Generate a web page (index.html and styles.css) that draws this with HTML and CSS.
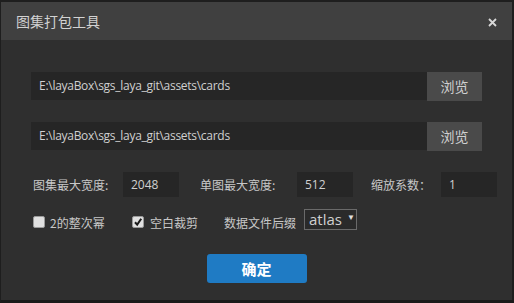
FILE: index.html
```html
<!DOCTYPE html>
<html>
<head>
<meta charset="utf-8">
<link rel="stylesheet" href="styles.css">
</head>
<body>
<div class="win">
  <div class="titlebar">
    <span class="title">图集打包工具</span>
    <svg class="close" width="9" height="9" viewBox="0 0 9 9"><path d="M1 1L8 8M8 1L1 8" stroke="#d8d8d8" stroke-width="1.8"/></svg>
  </div>
  <div class="content">
    <div class="pathrow">
      <div class="path">E:\layaBox\sgs_laya_git\assets\cards</div>
      <div class="browse">浏览</div>
    </div>
    <div class="pathrow second">
      <div class="path">E:\layaBox\sgs_laya_git\assets\cards</div>
      <div class="browse">浏览</div>
    </div>
    <div class="sizes">
      <span class="label l1">图集最大宽度:</span>
      <div class="num">2048</div>
      <span class="label l2">单图最大宽度:</span>
      <div class="num">512</div>
      <span class="label l3">缩放系数：</span>
      <div class="num">1</div>
    </div>
    <div class="opts">
      <span class="cb"></span><span class="label o1">2的整次幂</span>
      <span class="cb checked"><svg width="10" height="10" viewBox="0 0 10 10"><path d="M2 5.2L4.2 7.6L8.2 1.8" fill="none" stroke="#1a1a1a" stroke-width="2"/></svg></span><span class="label o2">空白裁剪</span>
      <span class="label o3">数据文件后缀</span>
      <div class="select">atlas<span class="arrow">▼</span></div>
    </div>
    <div class="okrow"><div class="ok">确定</div></div>
  </div>
</div>
</body>
</html>
```
FILE: styles.css
```css
html, body { margin: 0; padding: 0; background: #1c1c1c; }
body { width: 514px; height: 303px; overflow: hidden; font-family: "Noto Sans CJK SC", "Noto Sans", sans-serif; }
.win {
  box-sizing: border-box;
  width: 514px; height: 303px;
  border-top: 2px solid #1e1e1e;
  border-left: 1px solid #1e1e1e;
  border-right: 2px solid #1e1e1e;
  border-bottom: 3px solid #1a1a1a;
  background: #2f2f2f;
  display: flex; flex-direction: column;
}
.titlebar {
  height: 38px; background: #404040;
  display: flex; align-items: center; justify-content: space-between;
  padding: 0 15px 0 15px;
}
.title { color: #d2d2d2; font-size: 14px; }
.close { margin-top: 2px; }
.content { padding: 32px 0 0 30px; flex: 1; }
.pathrow { display: flex; height: 29px; }
.pathrow.second { margin-top: 21px; }
.path {
  width: 388px; height: 28px; background: #262626;
  color: #d0d0d0; font-size: 12px; line-height: 28px; padding-left: 8px;
  font-family: "Open Sans", "Noto Sans CJK SC", sans-serif; letter-spacing: -0.28px;
}
.browse {
  width: 55px; height: 29px; background: #4a4a4a; color: #d0d0d0;
  font-size: 14px; line-height: 29px; text-align: center;
}
.sizes { display: flex; align-items: center; margin-top: 21px; height: 25px; }
.label { color: #c8c8c8; font-size: 12px; }
.l1 { margin-left: 2px; width: 90px; }
.l2 { margin-left: 21px; width: 97px; }
.l3 { margin-left: 18px; width: 70px; }
.num {
  width: 48px; height: 25px; background: #262626; color: #d0d0d0;
  font-family: "Open Sans", sans-serif; font-size: 12px; line-height: 25px; padding-left: 8px;
}
.opts { display: flex; align-items: center; margin-top: 11px; height: 22px; }
.cb {
  background: #e0e0e0; border-radius: 2px; margin-left: 2px;
  display: flex; align-items: center; justify-content: center; margin-top: 6px;
  border: 1px solid #9a9a9a; box-sizing: border-box; width: 12px; height: 12px;
}
.label.o1, .label.o2, .label.o3 { margin-top: 6px; }
.o1 { margin-left: 5px; width: 80px; }
.o2 { margin-left: 6px; width: 74px; }
.o3 { width: 80px; }
.select {
  box-sizing: border-box; width: 53px; height: 21px; border: 1px solid #6a6a6a; background: #2a2a2a;
  color: #d0d0d0; font-family: "Open Sans", sans-serif; font-size: 15px; line-height: 19px; padding-left: 4px;
  display: flex; align-items: center;
}
.arrow { font-size: 8px; margin-left: 5px; margin-top: -5px; color: #e0e0e0; }
.okrow { display: flex; justify-content: center; margin-top: 24px; padding-right: 30px; }
.ok {
  width: 100px; height: 29px; background: #1f7bc4; border-radius: 3px; color: #fff;
  font-size: 15px; font-weight: bold; text-align: center; line-height: 29px;
}
```
